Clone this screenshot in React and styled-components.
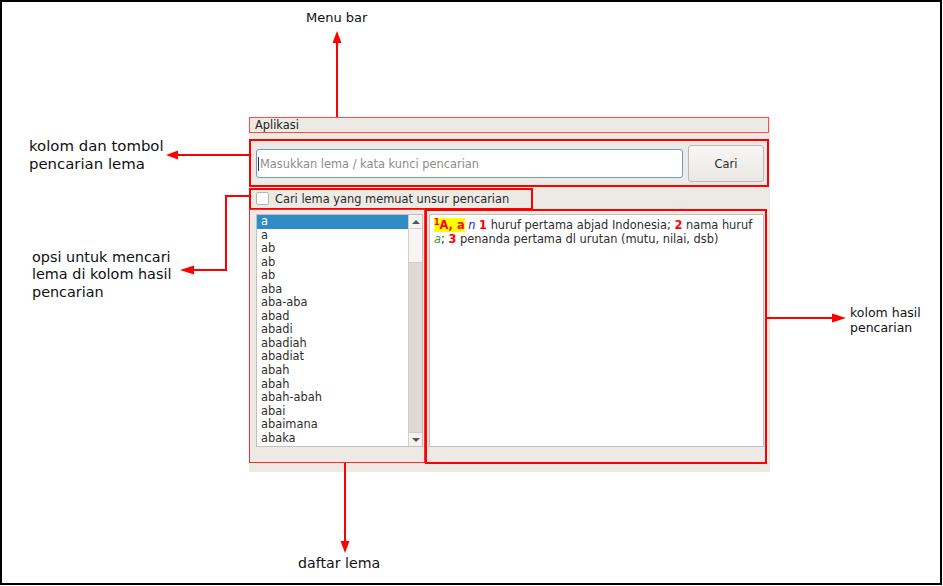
import React from "react";
import styled, { createGlobalStyle } from "styled-components";

const GlobalStyle = createGlobalStyle`
  html, body { margin: 0; padding: 0; background: #fff; }
  body { font-family: "DejaVu Sans", "Liberation Sans", sans-serif; }
  * { box-sizing: border-box; }
`;

const Stage = styled.div`
  position: relative;
  width: 942px;
  height: 585px;
  overflow: hidden;
  &::before {
    content: "";
    position: absolute;
    inset: 0;
    border: 2px solid #000;
    pointer-events: none;
  }
`;

const Window = styled.div`
  position: absolute;
  left: 249px;
  top: 117px;
  width: 521px;
  height: 355px;
  background: #edeae6;
  display: flex;
  flex-direction: column;
  font-family: "DejaVu Sans", sans-serif;
  font-size: 11.4px;
  color: #2e2e2e;
`;

const MenuBar = styled.div`
  height: 16px;
  line-height: 16px;
  padding-left: 6px;
  color: #222;
`;

const Central = styled.div`
  display: flex;
  flex-direction: column;
  padding: 12px 6px 0 7px;
`;

const SearchRow = styled.div`
  display: flex;
  align-items: center;
  gap: 5px;
  height: 37px;
`;

const SearchInput = styled.div`
  flex: 1;
  height: 29px;
  background: #fff;
  border: 1px solid #6f9bcc;
  border-radius: 3px;
  display: flex;
  align-items: center;
  padding-left: 1px;
  color: #8d8d8d;
`;

const Caret = styled.span`
  display: inline-block;
  width: 1px;
  height: 14px;
  background: #333;
  margin-right: 1px;
`;

const Button = styled.div`
  width: 76px;
  height: 37px;
  border: 1px solid #bdb8b0;
  border-radius: 3px;
  background: linear-gradient(#f8f7f6, #ebe8e4);
  display: flex;
  align-items: center;
  justify-content: center;
  color: #2a2a2a;
`;

const OptionRow = styled.div`
  display: flex;
  align-items: center;
  gap: 6px;
  height: 17px;
  margin-top: 8px;
  color: #2a2a2a;
`;

const CheckBox = styled.span`
  width: 13px;
  height: 13px;
  border: 1px solid #bab6af;
  border-radius: 2px;
  background: #fff;
`;

const Panels = styled.div`
  display: flex;
  gap: 6px;
  height: 233px;
  margin-top: 7px;
`;

const ListBox = styled.div`
  width: 167px;
  border: 1px solid #c3bfb9;
  background: #fff;
  display: flex;
  overflow: hidden;
`;

const Items = styled.div`
  flex: 1;
  overflow: hidden;
`;

const Item = styled.div`
  height: 13.55px;
  line-height: 13.55px;
  padding-left: 4px;
  white-space: nowrap;
  color: ${(p) => (p.$selected ? "#fff" : "#2e2e2e")};
  background: ${(p) => (p.$selected ? "#308cc6" : "transparent")};
`;

const ScrollBar = styled.div`
  width: 14px;
  border-left: 1px solid #d2cec8;
  display: flex;
  flex-direction: column;
  background: #dedbd6;
`;

const ScrollBtn = styled.div`
  height: 14px;
  background: #f3f2f0;
  display: flex;
  align-items: center;
  justify-content: center;
  ${(p) => (p.$down ? "margin-top: auto; border-top: 1px solid #cfcbc5;" : "border-bottom: 1px solid #d6d2cc;")}
`;

const Thumb = styled.div`
  height: 34px;
  background: #f6f5f3;
  border-bottom: 1px solid #cfcbc5;
`;

const Arrow = styled.span`
  width: 0;
  height: 0;
  border-left: 4px solid transparent;
  border-right: 4px solid transparent;
  ${(p) => (p.$down ? "border-top: 4px solid #555;" : "border-bottom: 4px solid #555;")}
`;

const ResultBox = styled.div`
  flex: 1;
  border: 1px solid #c3bfb9;
  background: #fff;
  padding: 4px 4px;
  color: #2e2e2e;
`;

const Line = styled.div`
  height: 13.5px;
  line-height: 13.5px;
  white-space: nowrap;
`;

const Head = styled.span`
  background: #ffff00;
  color: #ff0000;
  font-weight: bold;
`;

const Sup = styled.span`
  font-size: 8px;
  vertical-align: 4px;
  line-height: 0;
`;

const Num = styled.b`
  color: #ff0000;
`;

const Ital = styled.i`
  color: ${(p) => p.$color};
`;

const RedFrame = styled.div`
  position: absolute;
  left: ${(p) => p.$x}px;
  top: ${(p) => p.$y}px;
  width: ${(p) => p.$w}px;
  height: ${(p) => p.$h}px;
  border: ${(p) => p.$t}px solid ${(p) => p.$c || "#ff0000"};
  pointer-events: none;
`;

const Label = styled.div`
  position: absolute;
  left: ${(p) => p.$x}px;
  top: ${(p) => p.$y}px;
  font-family: "DejaVu Sans", sans-serif;
  font-size: ${(p) => p.$fs}px;
  line-height: ${(p) => p.$lh}px;
  color: #111;
  white-space: nowrap;
`;

const Overlay = styled.svg`
  position: absolute;
  left: 0;
  top: 0;
  pointer-events: none;
`;

const lemas = [
  "a", "a", "ab", "ab", "ab", "aba", "aba-aba", "abad", "abadi", "abadiah",
  "abadiat", "abah", "abah", "abah-abah", "abai", "abaimana", "abaka",
];

export default function App() {
  return (
    <>
      <GlobalStyle />
      <Stage>
        <Window>
          <MenuBar>Aplikasi</MenuBar>
          <Central>
            <SearchRow>
              <SearchInput>
                <Caret />
                Masukkan lema / kata kunci pencarian
              </SearchInput>
              <Button>Cari</Button>
            </SearchRow>
            <OptionRow>
              <CheckBox />
              Cari lema yang memuat unsur pencarian
            </OptionRow>
            <Panels>
              <ListBox>
                <Items>
                  {lemas.map((l, i) => (
                    <Item key={i} $selected={i === 0}>{l}</Item>
                  ))}
                </Items>
                <ScrollBar>
                  <ScrollBtn><Arrow /></ScrollBtn>
                  <Thumb />
                  <ScrollBtn $down><Arrow $down /></ScrollBtn>
                </ScrollBar>
              </ListBox>
              <ResultBox>
                <Line>
                  <Head><Sup>1</Sup>A, a</Head> <Ital $color="#1a1aff">n</Ital>{" "}
                  <Num>1</Num> huruf pertama abjad Indonesia; <Num>2</Num> nama huruf
                </Line>
                <Line>
                  <Ital $color="#3a9a3a">a</Ital>; <Num>3</Num> penanda pertama dl urutan (mutu, nilai, dsb)
                </Line>
              </ResultBox>
            </Panels>
          </Central>
        </Window>

        <RedFrame $x={249} $y={117} $w={520} $h={16} $t={1} $c="#ff4a4a" />
        <RedFrame $x={249} $y={139} $w={520} $h={48} $t={2} />
        <RedFrame $x={249} $y={188} $w={284} $h={22} $t={2} />
        <RedFrame $x={249} $y={209} $w={176} $h={254} $t={1} $c="#ff2a2a" />
        <RedFrame $x={425} $y={209} $w={342} $h={255} $t={2} />

        <Label $x={306} $y={9.5} $fs={13} $lh={15}>Menu bar</Label>
        <Label $x={29} $y={136.5} $fs={14.9} $lh={18}>
          kolom dan tombol<br />pencarian lema
        </Label>
        <Label $x={32} $y={248.5} $fs={14.4} $lh={17.8}>
          opsi untuk mencari<br />lema di kolom hasil<br />pencarian
        </Label>
        <Label $x={850} $y={305} $fs={12.5} $lh={15}>
          kolom hasil<br />pencarian
        </Label>
        <Label $x={298} $y={555} $fs={14.2} $lh={17}>daftar lema</Label>

        <Overlay width="943" height="586" viewBox="0 0 943 586">
          <g stroke="#ff0000" strokeWidth="2" fill="none">
            <line x1="337" y1="117" x2="337" y2="41" />
            <line x1="249" y1="155" x2="177" y2="155" />
            <polyline points="249,196 226,196 226,270 193,270" />
            <line x1="345" y1="463" x2="345" y2="542" />
            <line x1="767" y1="318" x2="833" y2="318" />
          </g>
          <g fill="#ff0000">
            <polygon points="337,31 332.5,43 341.5,43" />
            <polygon points="166,155 178,150.5 178,159.5" />
            <polygon points="180,270 194,265.5 194,274.5" />
            <polygon points="345,553 340.5,541 349.5,541" />
            <polygon points="846,318 832,313.5 832,322.5" />
          </g>
        </Overlay>
      </Stage>
    </>
  );
}
